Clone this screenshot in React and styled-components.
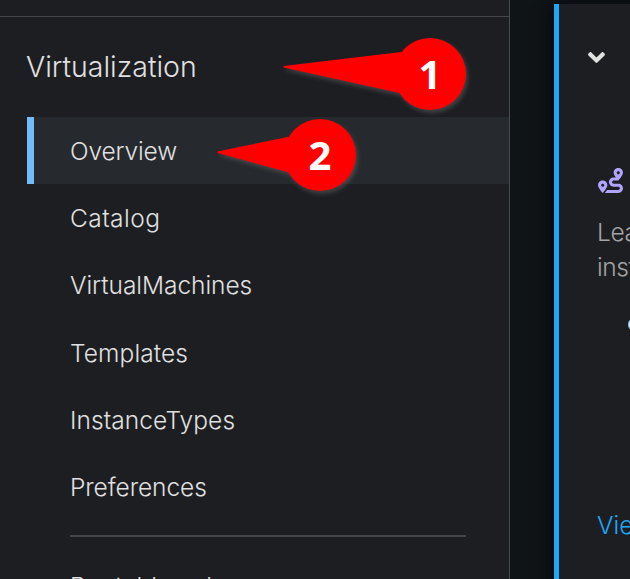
import React from "react";
import styled, { createGlobalStyle } from "styled-components";
import { FaRoute, FaAngleDown } from "react-icons/fa";

const GlobalStyle = createGlobalStyle`
  *, *::before, *::after { box-sizing: border-box; }
  body { margin: 0; background: #0f1214; overflow: hidden; }
`;

const Page = styled.div`
  position: relative;
  display: flex;
  width: 630px;
  height: 579px;
  overflow: hidden;
  background: #0f1416;
  font-family: Inter, "Open Sans", sans-serif;
  font-weight: 300;
`;

const Sidebar = styled.aside`
  flex: 0 0 510px;
  height: 579px;
  padding-top: 16px;
  overflow: hidden;
  background: #1d1e22;
  border-right: 1px solid #4a4b4e;
  color: #e0e0e0;
`;

const Section = styled.section`
  border-top: 1px solid #47484b;
  padding-left: 27px;
`;

const SectionTitle = styled.h2`
  margin: 0 0 0 -1px;
  height: 100px;
  font-size: 28.5px;
  font-weight: 300;
  line-height: 100px;
  letter-spacing: ${(p) => p.$tracking}px;
  white-space: nowrap;
`;

const NavList = styled.ul`
  margin: 0;
  padding: 0;
  list-style: none;
`;

const NavItem = styled.li`
  height: 67.2px;
  padding-left: 36px;
  border-left: 7px solid ${(p) => (p.$active ? "#73bcf7" : "transparent")};
  background: ${(p) => (p.$active ? "#26292d" : "transparent")};
  font-size: 24.5px;
  line-height: 68px;
  letter-spacing: ${(p) => p.$tracking}px;
  white-space: nowrap;
`;

const Divider = styled.hr`
  height: 2px;
  margin: 14.8px 43px 15px 43px;
  border: 0;
  background: #47484b;
`;

const Content = styled.main`
  flex: 1;
  padding: 4px 0 0 44px;
`;

const Card = styled.article`
  height: 620px;
  padding-left: 39px;
  overflow: hidden;
  background: #1d1e22;
  border-left: 5px solid #1fa7f8;
  box-shadow: 0 4px 16px 2px #060707;
`;

const CardHeader = styled.header`
  display: flex;
  align-items: center;
  height: 106px;
  margin-left: -15px;
  color: #e0e0e0;
  font-size: 27px;
`;

const TourIcon = styled.div`
  display: flex;
  height: 25px;
  margin-top: 58px;
  color: #b2a3ff;
  font-size: 25px;
`;

const Description = styled.p`
  width: 200px;
  margin: 22px 0 0 -1px;
  color: #a3a3a3;
  font-size: 24.5px;
  line-height: 35px;
  letter-spacing: -0.4px;
`;

const QuickStart = styled.div`
  width: 24px;
  height: 13px;
  margin: 33px 0 0 30px;
  background: #e6e6e0;
  border: 1px solid #73bcf7;
  border-radius: 6px;
`;

const CardLink = styled.a`
  display: block;
  width: 120px;
  margin: 176px 0 0 -1px;
  color: #1fa7f8;
  font-size: 24.5px;
  line-height: 36px;
  white-space: nowrap;
`;

const Callouts = styled.svg`
  position: absolute;
  inset: 0;
  filter: drop-shadow(2px 3px 2px rgba(100, 100, 100, 0.5));
`;

const CalloutNumber = styled.span`
  position: absolute;
  left: ${(p) => p.$x - 20}px;
  top: ${(p) => p.$y - 20}px;
  width: 40px;
  color: #fff;
  font: 700 40px/40px "Open Sans", "Noto Sans", sans-serif;
  text-align: center;
`;

const items = [
  { label: "Overview", tracking: -0.15, active: true },
  { label: "Catalog", tracking: 0.45 },
  { label: "VirtualMachines", tracking: -0.05 },
  { label: "Templates", tracking: 0.1 },
  { label: "InstanceTypes", tracking: 0.08 },
  { label: "Preferences", tracking: -0.08 },
];

export default function App() {
  return (
    <Page>
      <GlobalStyle />
      <Sidebar>
        <Section>
          <SectionTitle $tracking={0}>Virtualization</SectionTitle>
          <NavList>
            {items.map((item) => (
              <NavItem key={item.label} $active={item.active} $tracking={item.tracking}>
                {item.label}
              </NavItem>
            ))}
          </NavList>
          <Divider />
          <NavList>
            <NavItem $tracking={0.1}>Bootable volumes</NavItem>
          </NavList>
        </Section>
      </Sidebar>
      <Content>
        <Card>
          <CardHeader><FaAngleDown /></CardHeader>
          <TourIcon><FaRoute /></TourIcon>
          <Description>Learn how<br />instances</Description>
          <QuickStart />
          <CardLink>View all</CardLink>
        </Card>
      </Content>
      <Callouts width="630" height="579" viewBox="0 0 630 579" fill="#fe0000">
        <circle cx="430" cy="74" r="36" />
        <path d="M283.5 66 L401.5 52 L430 74 L399.5 93 L283.5 67.6Z" />
        <circle cx="320" cy="155" r="36" />
        <path d="M217.5 151.5 L290 136.5 L320 155 L289 172.5 L217.5 153Z" />
      </Callouts>
      <CalloutNumber $x={430} $y={74}>1</CalloutNumber>
      <CalloutNumber $x={320} $y={155}>2</CalloutNumber>
    </Page>
  );
}
